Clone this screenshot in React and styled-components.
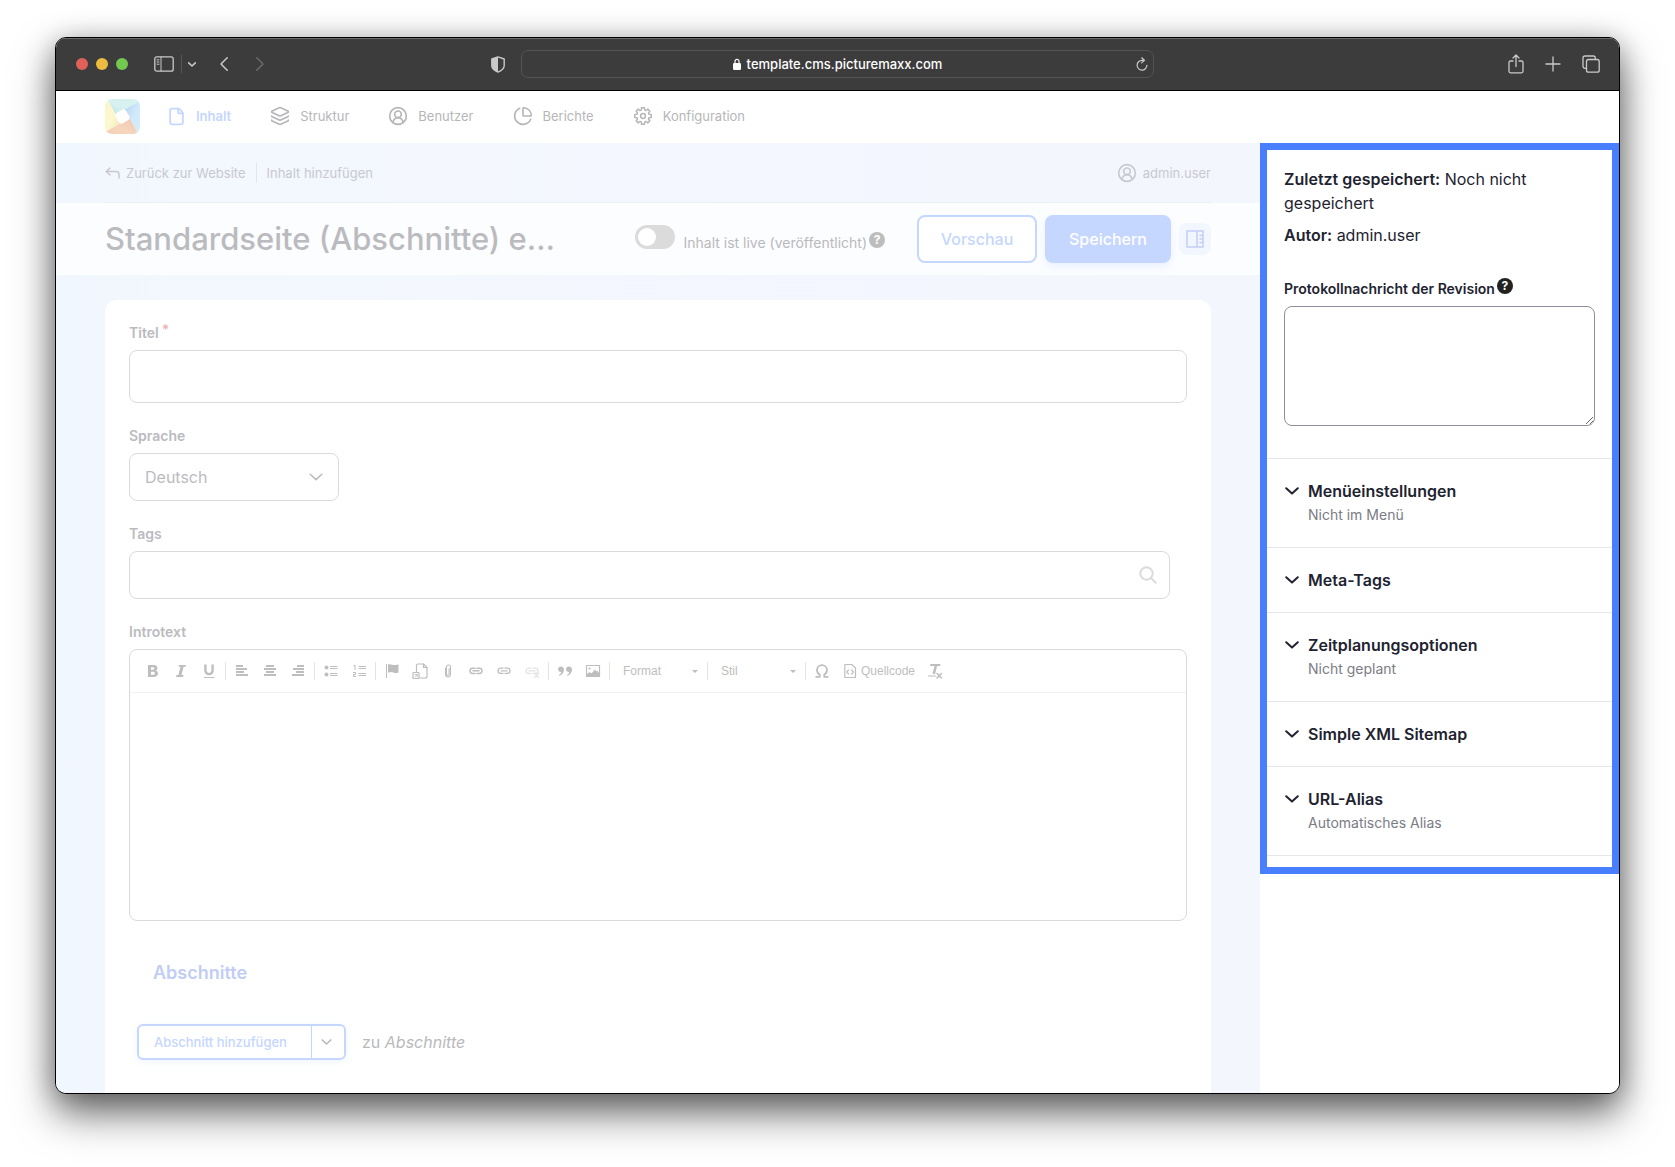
import React from "react";
import styled, { createGlobalStyle, css } from "styled-components";
import { File, Layers, CircleUserRound, ChartPie } from "lucide-react";

const GlobalStyle = createGlobalStyle`
  *, *::before, *::after { box-sizing: border-box; }
  body {
    margin: 0;
    background: #fff;
    font-family: Inter, "Liberation Sans", sans-serif;
    font-size: 16px;
    line-height: 24px;
    color: #222330;
  }
  button, input, select, textarea { font: inherit; color: inherit; }
  svg { display: block; flex: none; }
`;

const ink = "#bbbbbf";
const line = "#dadadc";
const accent = "#c5d6ff";

/* ---------- Window ---------- */

const Page = styled.div`
  display: flex;
  height: 100vh;
  min-height: 480px;
  padding: 37px 55px 73px;
  overflow: hidden;
`;

const Window = styled.div`
  flex: 1;
  min-width: 0;
  display: flex;
  flex-direction: column;
  overflow: hidden;
  border: 1px solid #000;
  border-radius: 11px;
  background: #fff;
  box-shadow: 0 20px 40px rgba(0, 0, 0, 0.55), 0 4px 28px rgba(0, 0, 0, 0.28);
`;

const TitleBar = styled.header`
  flex: none;
  display: grid;
  grid-template-columns: 1fr minmax(0, 633px) 1fr;
  align-items: center;
  height: 53px;
  border-bottom: 1px solid #000;
  background: #3c3c3c;
  box-shadow: inset 0 1px 0 #6a6a6a;
  color: #c9c9c9;
`;

const BarStart = styled.div`
  display: flex;
  align-items: center;
  padding: 0 16px 0 20px;
`;

const Lights = styled.div`
  display: flex;
  gap: 8px;
  margin-right: 26px;
`;

const Light = styled.button`
  width: 12px;
  height: 12px;
  padding: 0;
  border: 0;
  border-radius: 50%;
  background: ${(p) => p.$color};
`;

const BarButton = styled.button`
  display: flex;
  padding: 0;
  border: 0;
  background: none;
  color: ${(p) => (p.$dim ? "#6b6b6b" : "inherit")};
  margin-left: ${(p) => p.$gap || 0}px;
`;

const BarRule = styled.span`
  width: 1px;
  height: 18px;
  margin: 0 6px 0 7px;
  background: #555;
`;

const Push = styled.span`
  flex: 1;
`;

const Address = styled.div`
  display: grid;
  grid-template-columns: 1fr auto 1fr;
  align-items: center;
  height: 28px;
  padding: 0 5px;
  border: 1px solid #545454;
  border-radius: 7px;
`;

const AddressText = styled.span`
  grid-column: 2;
  display: flex;
  align-items: center;
  gap: 6px;
  font-size: 13px;
  line-height: 20px;
  font-weight: 500;
  color: #fff;
`;

const AddressReload = styled(BarButton)`
  justify-self: end;
`;

const BarEnd = styled.div`
  display: flex;
  align-items: center;
  justify-content: flex-end;
  gap: 20px;
  padding-right: 19px;
`;

/* ---------- Admin navigation ---------- */

const Nav = styled.nav`
  flex: none;
  display: flex;
  align-items: center;
  gap: 26px;
  height: 52px;
  padding: 0 49px 2px;
  background: #fff;
`;

const NavList = styled.div`
  display: flex;
  gap: 39px;
`;

const NavLink = styled.a`
  display: flex;
  align-items: center;
  gap: 10px;
  font-size: 13px;
  line-height: 20px;
  font-weight: ${(p) => (p.$active ? 600 : 400)};
  color: ${(p) => (p.$active ? accent : "#b6b6b9")};
  text-decoration: none;
`;

const NavIcon = styled.span`
  display: flex;
  align-items: center;
  justify-content: center;
  width: 20px;
  height: 20px;
`;

/* ---------- Page body ---------- */

const Body = styled.div`
  flex: 1;
  min-height: 0;
  display: flex;
`;

const Main = styled.main`
  flex: 1;
  min-width: 0;
  display: flex;
  flex-direction: column;
  background: linear-gradient(90deg, #f1f7fe, #f3f7fe 10%, #f4f6fe);
`;

const Crumbs = styled.div`
  flex: none;
  display: flex;
  align-items: center;
  height: 60px;
  margin: 0 49px;
  border-bottom: 1px solid #eceef6;
  font-size: 13px;
  line-height: 20px;
  color: #c8c9ce;
`;

const CrumbLink = styled.a`
  display: flex;
  align-items: center;
  gap: 6px;
  color: inherit;
  text-decoration: none;
  ${(p) =>
    p.$divided &&
    css`
      margin-left: 11px;
      padding-left: 9px;
      border-left: 1px solid #e4e6ec;
    `}
`;

const TitleRow = styled.div`
  flex: none;
  display: flex;
  align-items: center;
  justify-content: space-between;
  height: 72px;
  padding: 0 49px;
  background: #fcfdff;
`;

const PageTitle = styled.h1`
  margin: 0;
  min-width: 0;
  overflow: hidden;
  white-space: nowrap;
  font-size: 31px;
  line-height: 48px;
  font-weight: 500;
  color: ${ink};
`;

const Actions = styled.div`
  flex: none;
  display: flex;
  align-items: center;
  gap: 8px;
`;

const LiveToggle = styled.div`
  display: flex;
  align-items: center;
  gap: 8px;
  margin-right: 24px;
`;

const Switch = styled.input`
  appearance: none;
  width: 40px;
  height: 24px;
  margin: 0 0 4px;
  padding: 3px;
  border-radius: 12px;
  background: #dbdbdc;
  &::before {
    content: "";
    display: block;
    width: 18px;
    height: 18px;
    border-radius: 50%;
    background: #fff;
  }
`;

const HelpLabel = styled.span`
  display: flex;
  align-items: center;
  gap: 2px;
`;

const LiveHelpLabel = styled(HelpLabel)`
  padding-top: 8px;
`;

const LiveLabel = styled.label`
  font-size: 14px;
  line-height: 24px;
  color: #b9b9bc;
`;

const Help = styled.button`
  flex: none;
  width: 16px;
  height: 16px;
  margin: -4px 0 2px;
  padding: 0;
  border: 0;
  border-radius: 50%;
  background: ${(p) => p.$color};
  color: #fff;
  font-size: 12px;
  line-height: 16px;
  font-weight: 700;
  text-align: center;
`;

const ActionButton = styled.button`
  height: 48px;
  width: ${(p) => (p.$primary ? 126 : 120)}px;
  padding: 0;
  border: 2px solid ${accent};
  border-radius: 8px;
  background: ${(p) => (p.$primary ? accent : "#fff")};
  color: ${(p) => (p.$primary ? "#fff" : accent)};
  font-weight: 500;
  box-shadow: ${(p) => (p.$primary ? "0 4px 8px rgba(197, 214, 255, 0.3)" : "none")};
`;

const PanelButton = styled.button`
  display: flex;
  align-items: center;
  justify-content: center;
  width: 32px;
  height: 32px;
  padding: 0;
  border: 0;
  border-radius: 8px;
  background: #f2f6fe;
  color: #c3cef4;
`;

const Card = styled.form`
  flex: 1;
  min-height: 0;
  display: flex;
  flex-direction: column;
  gap: 24px;
  margin: 25px 49px 0;
  padding: 24px 24px 0;
  border-radius: 12px 12px 0 0;
  background: #fff;
  overflow: hidden;
`;

const Field = styled.div`
  flex: none;
  display: flex;
  flex-direction: column;
  gap: 8px;
`;

const Label = styled.label`
  font-size: 14px;
  line-height: 18px;
  font-weight: 600;
  color: ${(p) => p.$color || ink};
`;

const Required = styled.span`
  margin-left: 3px;
  vertical-align: 3px;
  line-height: 0;
  color: #f0b4b4;
`;

const box = css`
  border: 1px solid ${line};
  border-radius: 8px;
  background: #fff;
`;

const TextInput = styled.input`
  ${box}
  width: 100%;
  height: 53px;
  padding: 0 16px;
`;

const SelectWrap = styled.div`
  display: grid;
  align-items: center;
  width: 210px;
  color: ${ink};
  & > * { grid-area: 1 / 1; }
  & > svg { justify-self: end; margin-right: 16px; pointer-events: none; }
`;

const Select = styled.select`
  ${box}
  appearance: none;
  width: 100%;
  height: 48px;
  padding: 0 15px;
`;

const SearchBox = styled.div`
  ${box}
  display: flex;
  align-items: center;
  height: 48px;
  margin-right: 17px;
  padding-right: 12px;
  color: #dadada;
`;

const SearchInput = styled.input`
  flex: 1;
  min-width: 0;
  height: 100%;
  padding: 0 16px;
  border: 0;
  background: none;
`;

/* ---------- Rich text editor ---------- */

const Editor = styled.div`
  ${box}
  height: 272px;
  display: flex;
  flex-direction: column;
  overflow: hidden;
`;

const ToolBar = styled.div`
  flex: none;
  display: flex;
  align-items: center;
  height: 43px;
  padding: 0 9px;
  border-bottom: 1px solid #f0f0f0;
  color: #bebebe;
  font-family: "Liberation Sans", Arial, sans-serif;
  font-size: 12px;
  line-height: 16px;
`;

const Tool = styled.button`
  display: flex;
  align-items: center;
  gap: 3px;
  height: 28px;
  padding: 0 6px;
  border: 0;
  background: none;
  opacity: ${(p) => (p.$off ? 0.4 : 1)};
`;

const ToolRule = styled.span`
  width: 1px;
  height: 18px;
  margin: 0 2px;
  background: #e4e4e4;
`;

const ComboWrap = styled.div`
  display: grid;
  align-items: center;
  width: 93px;
  & > * { grid-area: 1 / 1; }
  & > svg { justify-self: end; margin-right: 7px; pointer-events: none; }
`;

const Combo = styled.select`
  appearance: none;
  width: 100%;
  height: 28px;
  padding: 0 11px;
  border: 0;
  background: none;
`;

const EditArea = styled.textarea`
  flex: 1;
  width: 100%;
  padding: 16px;
  border: 0;
  background: none;
  resize: none;
`;

/* ---------- Sections ---------- */

const SectionTitle = styled.h2`
  flex: none;
  margin: 16px 0 0;
  padding: 0 24px;
  font-size: 18px;
  line-height: 24px;
  font-weight: 600;
  color: #c2cdf5;
`;

const AddRow = styled.div`
  flex: none;
  display: flex;
  align-items: center;
  gap: 16px;
  margin-top: 15px;
  padding: 0 8px;
  color: #b9b9bc;
`;

const SplitButton = styled.div`
  display: flex;
  height: 36px;
  border: 2px solid ${accent};
  border-radius: 6px;
  box-shadow: 0 2px 6px rgba(197, 214, 255, 0.25);
`;

const SplitMain = styled.button`
  width: 172px;
  padding: 0 15px;
  border: 0;
  background: none;
  color: ${accent};
  font-size: 13px;
  font-weight: 500;
  text-align: left;
  white-space: nowrap;
`;

const SplitMore = styled.button`
  display: flex;
  align-items: center;
  justify-content: center;
  width: 33px;
  padding: 0 3px 0 0;
  border: 0;
  border-left: 1px solid ${accent};
  background: none;
  color: ${ink};
`;

/* ---------- Sidebar ---------- */

const Sidebar = styled.aside`
  flex: none;
  width: 359px;
  background: #fff;
`;

const Highlight = styled.div`
  border: 7px solid #477fff;
  padding-bottom: 11px;
`;

const Meta = styled.div`
  padding: 17px 17px 32px;
`;

const MetaLine = styled.p`
  margin: 0 0 8px;
`;

const Strong = styled.strong`
  font-weight: 600;
`;

const MessageField = styled(Field)`
  margin-top: 33px;
`;

const MessageBox = styled.textarea`
  display: block;
  width: 100%;
  height: 120px;
  padding: 12px 16px;
  border: 1px solid #8e8f9c;
  border-radius: 8px;
  background: #fff;
`;

const Accordion = styled.section`
  border-bottom: 1px solid #e6e6e8;
`;

const AccordionItem = styled.button`
  display: grid;
  grid-template-columns: 14px 1fr;
  column-gap: 9px;
  align-items: center;
  width: 100%;
  padding: 20px 18px;
  border: 0;
  border-top: 1px solid #e6e6e8;
  background: none;
  text-align: left;
`;

const AccordionTitle = styled.span`
  font-weight: 600;
`;

const AccordionNote = styled.span`
  grid-column: 2;
  font-size: 14px;
  color: #7b7c85;
`;

/* ---------- Drawings ---------- */

const Svg = ({ w = 16, h = w, vb, sw = 1.3, children, ...rest }) => (
  <svg
    width={w}
    height={h}
    viewBox={vb || `0 0 ${w} ${h}`}
    fill="none"
    stroke="currentColor"
    strokeWidth={sw}
    strokeLinecap="round"
    strokeLinejoin="round"
    aria-hidden="true"
    {...rest}
  >
    {children}
  </svg>
);

const Chevron = ({ w = 14, h = 8, sw = 2 }) => (
  <Svg w={w} h={h} vb="0 0 14 8" sw={sw}>
    <path d="M1.2 1.2 7 6.6l5.8-5.4" />
  </Svg>
);

const gearPath = Array.from({ length: 8 }, (_, i) => {
  const at = (deg, r) => {
    const a = ((i * 45 + deg) * Math.PI) / 180;
    return `${(10 + r * Math.sin(a)).toFixed(2)} ${(10 - r * Math.cos(a)).toFixed(2)}`;
  };
  return `${i ? "L" : "M"}${at(-15, 6.4)}L${at(-10, 8.4)}L${at(10, 8.4)}L${at(15, 6.4)}Q${at(22.5, 5.8)} ${at(30, 6.4)}`;
}).join("");

const Gear = () => (
  <Svg w={20} sw={1.5}>
    <path d={`${gearPath}Z`} />
    <circle cx="10" cy="10" r="2.4" />
  </Svg>
);

const Logo = () => (
  <svg width="35" height="35" viewBox="0 0 35 35" aria-hidden="true">
    <defs>
      <clipPath id="logoClip"><rect width="35" height="35" rx="7" /></clipPath>
      <linearGradient id="logoTop" x1="0" y1="1" x2="1" y2="0">
        <stop offset="0" stopColor="#b9dcdf" /><stop offset=".5" stopColor="#d6f1f0" /><stop offset="1" stopColor="#d9f2f0" />
      </linearGradient>
      <linearGradient id="logoRight" x1="0" y1="0" x2="1" y2="1">
        <stop offset="0" stopColor="#b5cdea" /><stop offset=".5" stopColor="#d0e8fb" /><stop offset="1" stopColor="#d4effc" />
      </linearGradient>
      <linearGradient id="logoBottom" x1="1" y1="0" x2="0" y2="1">
        <stop offset="0" stopColor="#efc4b2" /><stop offset=".6" stopColor="#f6d6bd" /><stop offset="1" stopColor="#f6cfb8" />
      </linearGradient>
      <linearGradient id="logoLeft" x1="1" y1="1" x2="0" y2="0">
        <stop offset="0" stopColor="#efe6b8" /><stop offset=".5" stopColor="#fcf8cf" /><stop offset="1" stopColor="#fbf5cb" />
      </linearGradient>
    </defs>
    <g clipPath="url(#logoClip)">
      <path d="M0 0h35v3L18 12l-6 7L2 0z" fill="url(#logoTop)" />
      <path d="M35 2v33h-2l-9-16-5-8z" fill="url(#logoRight)" />
      <path d="M33 35H0v-2l15-9 9-6z" fill="url(#logoBottom)" />
      <path d="M0 33V0h2l9 16 6 7z" fill="url(#logoLeft)" />
      <rect x="11.5" y="11.5" width="12" height="12" rx="3" fill="#fff" transform="rotate(-30 17.5 17.5)" />
    </g>
  </svg>
);

const Lines = ({ rows }) => (
  <Svg sw={2} strokeLinecap="butt">
    {rows.map(([x1, x2], i) => (
      <path key={i} d={`M${x1} ${3 + i * 3}H${x2}`} />
    ))}
  </Svg>
);

const Chain = () => (
  <>
    <path d="M7 5.2H4.6a2.6 2.6 0 0 0 0 5.2H7M9 5.2h2.4a2.6 2.6 0 0 1 0 5.2H9" />
    <path d="M5 7.8h6" />
  </>
);

const solid = { fill: "currentColor", stroke: "none" };

const toolGroups = [
  [
    ["Fett", <Svg key="b" {...solid}><path d="M3 2h5.6c2.4 0 3.8 1.1 3.8 3 0 1.3-.7 2.2-1.8 2.6 1.5.4 2.3 1.4 2.3 2.9 0 2.2-1.5 3.5-4.1 3.5H3zm3 2.2v2.5h1.9c1 0 1.5-.4 1.5-1.2 0-.9-.5-1.3-1.5-1.3zm0 4.6v3h2.2c1.1 0 1.6-.5 1.6-1.5s-.6-1.5-1.7-1.5z" /></Svg>],
    ["Kursiv", <Svg key="i" {...solid}><path d="M6 2h7l-.4 1.8h-2L8.500 12h2l-.4 2H3l.4-2h2l2.100-8.200h-2z" /></Svg>],
    ["Unterstrichen", <Svg key="u" sw={2.4} strokeLinecap="butt"><path d="M4.400 1.500v6a3.600 3.600 0 0 0 7.200 0v-6" /><path d="M3 14.500h10.500" strokeWidth="1" /></Svg>],
  ],
  [
    ["Linksbündig", <Lines key="l" rows={[[2, 9], [2, 13], [2, 10], [2, 14]]} />],
    ["Zentriert", <Lines key="c" rows={[[4, 12], [2, 14], [4, 12], [2, 14]]} />],
    ["Rechtsbündig", <Lines key="r" rows={[[7, 14], [3, 14], [6, 14], [2, 14]]} />],
  ],
  [
    ["Liste", <Svg key="ul" sw={1} strokeLinecap="butt"><circle cx="3.5" cy="4.5" r="2" {...solid} /><circle cx="3.5" cy="11.5" r="2" {...solid} /><path d="M7 3.500h7.500M7 5.500h7.500M7 10.500h7.500M7 12.500h7.500" /></Svg>],
    ["Nummerierte Liste", <Svg key="ol" sw={1} strokeLinecap="butt"><path d="M2.500 3l1.500-1v5M2 9.500h2.500v2H2.500v2H5M7.500 3.500H15M7.500 5.500H15M7.500 10.500H15M7.500 12.500H15" /></Svg>],
  ],
  [
    ["Anker", <Svg key="f" sw={1} strokeLinecap="butt"><path d="M2.500 1v14" /><path d="M4 1.500c3-1 5 1 7 .5 1.300 0 2.500-.5 3.500-.5v8c-2 .7-3.500.7-5 0-2-1-3.500-.5-5.500.3z" {...solid} /></Svg>],
    ["Datei einfügen", <Svg key="d" sw={1.2}><path d="M4.500 9V2.500c0-1 .5-1.500 1.500-1.500h5.500L15 4.500V13c0 1.500-.5 2-2 2H8" /><path d="M11.500 1v3.500H15" /><rect x="1" y="9.5" width="6" height="6" rx=".5" /><path d="M3 11.500h2.200v2.200M3 13.800l2-2" strokeWidth=".9" /></Svg>],
    ["Anhang", <Svg key="a" sw={1.1}><path d="M5.500 5v6.500a2.500 2.500 0 0 0 5 0V4a2 2 0 0 0-4 0v7a1.300 1.300 0 0 0 2.600 0V5.500" /></Svg>],
    ["Link", <Svg key="k" sw={1.5}><Chain /></Svg>],
    ["Link bearbeiten", <Svg key="m" sw={1.3}><Chain /></Svg>],
    ["Link entfernen", <Svg key="n" sw={1.3}><Chain /><path d="M10.500 10.500l4 4M14.500 10.500l-4 4" /></Svg>, true],
  ],
  [
    ["Zitat", <Svg key="q" {...solid}><path d="M4 3.500c1.900 0 3 1.300 3 3.300 0 3-2 5.200-4.700 6l-.4-.9C3.300 11.200 4.200 10.300 4.300 9 2.500 9.200 1 8 1 6.300c0-1.600 1.300-2.800 3-2.800zM12 3.500c1.900 0 3 1.300 3 3.300 0 3-2 5.200-4.700 6l-.4-.9c1.400-.7 2.300-1.600 2.400-2.900C10.500 9.200 9 8 9 6.300c0-1.600 1.300-2.800 3-2.800z" /></Svg>],
    ["Bild", <Svg key="p" sw={1.2}><rect x="1.5" y="2.5" width="13" height="11" /><circle cx="4.5" cy="5.5" r="1.1" {...solid} /><path d="M2 13v-2l2.500-2 2 1.500L10 6.500l1.500 2 1-.8L14 10v3z" {...solid} /></Svg>],
  ],
];

const navItems = [
  ["Inhalt", <File key="i" size={19} strokeWidth={2.3} />, true],
  ["Struktur", <Layers key="s" size={20} />],
  ["Benutzer", <CircleUserRound key="b" size={20} />],
  ["Berichte", <ChartPie key="r" size={20} />],
  ["Konfiguration", <Gear key="k" />],
];

const settings = [
  ["Menüeinstellungen", "Nicht im Menü"],
  ["Meta-Tags"],
  ["Zeitplanungsoptionen", "Nicht geplant"],
  ["Simple XML Sitemap"],
  ["URL-Alias", "Automatisches Alias"],
];

const ToolCombo = ({ label }) => (
  <ComboWrap>
    <Combo aria-label={label}><option>{label}</option></Combo>
    <Svg w={6} h={3} {...solid}><path d="M0 0h6L3 3z" /></Svg>
  </ComboWrap>
);

function BrowserBar() {
  return (
    <TitleBar>
      <BarStart>
        <Lights>
          <Light $color="#e0605a" aria-label="Schließen" />
          <Light $color="#ecbb40" aria-label="Minimieren" />
          <Light $color="#73c84f" aria-label="Vollbild" />
        </Lights>
        <BarButton aria-label="Seitenleiste">
          <Svg w={20} h={16}>
            <rect x=".8" y=".8" width="18.4" height="14.4" rx="2" />
            <path d="M7 1v14M3 3.800h2M3 6h2M3 8.200h2" strokeWidth="1" />
          </Svg>
        </BarButton>
        <BarRule />
        <BarButton aria-label="Tabgruppen"><Chevron w={8} h={5} sw={2.8} /></BarButton>
        <BarButton aria-label="Zurück" $gap={24}><Svg w={8} h={14} sw={1.5}><path d="M7.200.8 1 7l6.200 6.200" /></Svg></BarButton>
        <BarButton aria-label="Vorwärts" $gap={28} $dim><Svg w={8} h={14} sw={1.5}><path d="M.8.8 7 7 .8 13.200" /></Svg></BarButton>
        <Push />
        <BarButton aria-label="Datenschutzbericht">
          <Svg w={14} h={17} sw={1.4}>
            <path d="M7 .9 13.200 3v6.500c0 3-2.500 5-6.200 6.600C3.300 14.500.8 12.500.8 9.500V3z" />
            <path d="M7 .9v15.200C3.300 14.500.8 12.500.8 9.500V3z" fill="currentColor" stroke="none" />
          </Svg>
        </BarButton>
      </BarStart>
      <Address>
        <AddressText>
          <Svg w={8} h={12} sw={1.2}>
            <path d="M2 5.500V3.300a2 2 0 0 1 4 0v2.200" />
            <rect y="5" width="8" height="7" rx="1.2" {...solid} />
          </Svg>
          template.cms.picturemaxx.com
        </AddressText>
        <AddressReload aria-label="Neu laden">
          <Svg w={12} h={14} sw={1.2}>
            <path d="M6 3.300a4.900 4.900 0 1 0 4.900 5M6 3.300h2.200M5.700.8l2.700 2.500-2.700 2.600" />
          </Svg>
        </AddressReload>
      </Address>
      <BarEnd>
        <BarButton aria-label="Teilen">
          <Svg w={16} h={20}>
            <path d="M5 7H2.500C1.500 7 1 7.500 1 8.500v8.800c0 1 .5 1.500 1.500 1.500h11c1 0 1.500-.5 1.500-1.500V8.500C15 7.500 14.500 7 13.500 7H11M8 12.500V1.200M5 4l3-3 3 3" />
          </Svg>
        </BarButton>
        <BarButton aria-label="Neuer Tab"><Svg w={18} h={16}><path d="M9 1v14M2 8h14" /></Svg></BarButton>
        <BarButton aria-label="Tabs anzeigen">
          <Svg w={18} h={18}>
            <rect x="4.5" y="4.5" width="12.7" height="12.7" rx="2" />
            <path d="M4.500 13.300H3a2 2 0 0 1-2-2V3a2 2 0 0 1 2-2h8.300a2 2 0 0 1 2 2v1.500" />
          </Svg>
        </BarButton>
      </BarEnd>
    </TitleBar>
  );
}

function EditorTools() {
  return (
    <ToolBar>
      {toolGroups.map((group, i) => (
        <React.Fragment key={i}>
          {group.map(([name, icon, off]) => (
            <Tool key={name} type="button" aria-label={name} $off={off}>{icon}</Tool>
          ))}
          <ToolRule />
        </React.Fragment>
      ))}
      <ToolCombo label="Format" />
      <ToolRule />
      <ToolCombo label="Stil" />
      <ToolRule />
      <Tool type="button" aria-label="Sonderzeichen">
        <Svg sw={1.8} strokeLinecap="butt">
          <path d="M1.500 13.800h4.300v-2C3.800 10.500 3 9 3 7.200a5 5 0 0 1 10 0c0 1.800-.8 3.300-2.800 4.600v2h4.300" />
        </Svg>
      </Tool>
      <Tool type="button">
        <Svg sw={1.2}>
          <path d="M2.800 1.500h7L13.500 5v9.500H2.800zM6.500 7 4.800 9l1.700 2M9.700 7l1.700 2-1.700 2" />
        </Svg>
        Quellcode
      </Tool>
      <Tool type="button" aria-label="Formatierung entfernen">
        <Svg {...solid}>
          <path d="M3.500 1h10l-.4 2h-3l-2 8H5.500l2-8H3zM1 12.500h8v1H1z" />
          <path d="M10 10.500l4.500 4.500M14.500 10.500L10 15" stroke="currentColor" strokeWidth="1.5" />
        </Svg>
      </Tool>
    </ToolBar>
  );
}

export default function App() {
  return (
    <Page>
      <GlobalStyle />
      <Window>
        <BrowserBar />
        <Nav>
          <Logo />
          <NavList>
            {navItems.map(([name, icon, active]) => (
              <NavLink key={name} href="#" $active={active}>
                <NavIcon>{icon}</NavIcon>
                {name}
              </NavLink>
            ))}
          </NavList>
        </Nav>
        <Body>
          <Main>
            <Crumbs>
              <CrumbLink href="#">
                <Svg w={15} h={12} sw={1.5}><path d="M5 1 1.200 4.500 5 8M1.500 4.500H11c2 0 3 1 3 3V11" /></Svg>
                Zurück zur Website
              </CrumbLink>
              <CrumbLink href="#" $divided>Inhalt hinzufügen</CrumbLink>
              <Push />
              <CrumbLink href="#">
                <CircleUserRound size={20} />
                admin.user
              </CrumbLink>
            </Crumbs>
            <TitleRow>
              <PageTitle>Standardseite (Abschnitte) e…</PageTitle>
              <Actions>
                <LiveToggle>
                  <Switch type="checkbox" id="live" />
                  <LiveHelpLabel>
                    <LiveLabel htmlFor="live">Inhalt ist live (veröffentlicht)</LiveLabel>
                    <Help type="button" $color="#bdbdbd">?</Help>
                  </LiveHelpLabel>
                </LiveToggle>
                <ActionButton>Vorschau</ActionButton>
                <ActionButton $primary>Speichern</ActionButton>
                <PanelButton aria-label="Seitenleiste umschalten">
                  <Svg w={18} h={18} sw={1.5}>
                    <path d="M1 1h16v16H1zM11 1v16M14 5.500h3M14 9h3M14 12.500h3" />
                  </Svg>
                </PanelButton>
              </Actions>
            </TitleRow>
            <Card>
              <Field>
                <Label htmlFor="title">Titel<Required>*</Required></Label>
                <TextInput id="title" type="text" />
              </Field>
              <Field>
                <Label htmlFor="language">Sprache</Label>
                <SelectWrap>
                  <Select id="language"><option>Deutsch</option></Select>
                  <Chevron sw={1.5} />
                </SelectWrap>
              </Field>
              <Field>
                <Label htmlFor="tags">Tags</Label>
                <SearchBox>
                  <SearchInput id="tags" type="text" />
                  <Svg w={18} h={18} sw={2} strokeLinecap="butt"><circle cx="7.5" cy="7.5" r="6.2" /><path d="m12 12 5.200 5.200" /></Svg>
                </SearchBox>
              </Field>
              <Field>
                <Label htmlFor="intro">Introtext</Label>
                <Editor>
                  <EditorTools />
                  <EditArea id="intro" />
                </Editor>
              </Field>
              <SectionTitle>Abschnitte</SectionTitle>
              <AddRow>
                <SplitButton>
                  <SplitMain type="button">Abschnitt hinzufügen</SplitMain>
                  <SplitMore type="button" aria-label="Weitere Aktionen"><Chevron w={11} h={6} sw={2} /></SplitMore>
                </SplitButton>
                <span>zu <em>Abschnitte</em></span>
              </AddRow>
            </Card>
          </Main>
          <Sidebar>
            <Highlight>
              <Meta>
                <MetaLine><Strong>Zuletzt gespeichert:</Strong> Noch nicht gespeichert</MetaLine>
                <MetaLine><Strong>Autor:</Strong> admin.user</MetaLine>
                <MessageField>
                  <HelpLabel>
                    <Label htmlFor="message" $color="#222330">Protokollnachricht der Revision</Label>
                    <Help type="button" $color="#222222">?</Help>
                  </HelpLabel>
                  <MessageBox id="message" />
                </MessageField>
              </Meta>
              <Accordion>
                {settings.map(([title, note]) => (
                  <AccordionItem key={title} type="button">
                    <Chevron />
                    <AccordionTitle>{title}</AccordionTitle>
                    {note && <AccordionNote>{note}</AccordionNote>}
                  </AccordionItem>
                ))}
              </Accordion>
            </Highlight>
          </Sidebar>
        </Body>
      </Window>
    </Page>
  );
}
